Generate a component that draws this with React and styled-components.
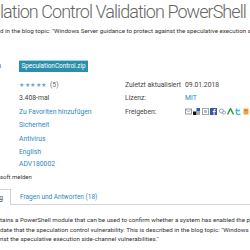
import styled, { createGlobalStyle } from "styled-components";

const Global = createGlobalStyle`
  html, body { margin: 0; padding: 0; background: #fff; }
  body { font-family: "Segoe UI", Roboto, "Noto Sans", sans-serif; color: #333; }
`;

const Page = styled.div`
  width: 250px;
  height: 250px;
  overflow: hidden;
  position: relative;
`;

const Title = styled.h1`
  margin: 0;
  font-size: 18px;
  line-height: 24px;
  font-weight: 300;
  letter-spacing: -0.95px;
  color: #666;
  white-space: nowrap;
`;

const Small = styled.div`
  font-size: ${(p) => p.size || 6.2}px;
  line-height: 10px;
  color: ${(p) => p.color || "#333"};
  white-space: nowrap;
  margin-top: ${(p) => p.mt || 0}px;
`;

// Eigenschaften-Tabelle, nach links aus dem Bild geschoben
const Details = styled.div`
  margin-left: -42px;
  margin-top: 24px;
`;

const Row = styled.div`
  display: grid;
  grid-template-columns: 61px 106px 60px 1fr;
  align-items: center;
  height: ${(p) => p.h || 13}px;
  font-size: 6.8px;
  white-space: nowrap;
`;

const Label = styled.div`
  color: #444;
`;

const Value = styled.div`
  color: ${(p) => (p.link ? "#2f88c4" : "#444")};
  display: flex;
  align-items: center;
  gap: 3px;
`;

const Button = styled.div`
  width: 69px;
  height: 11px;
  background: #2a8faa;
  border-top: 1px solid #9fd6e6;
  color: #fff;
  font-size: 6.4px;
  line-height: 11px;
  text-align: center;
`;

const Stars = styled.span`
  color: #6aa9cf;
  font-size: 6px;
  letter-spacing: 0.6px;
`;

const Icons = styled.div`
  display: flex;
  gap: 1.4px;
  align-items: center;
`;

const Tabs = styled.div`
  display: flex;
  margin-top: 7px;
  height: 15px;
  border-bottom: 1px solid #d4d4d4;
`;

const Tab = styled.div`
  display: flex;
  align-items: center;
  justify-content: ${(p) => (p.active ? "flex-end" : "flex-start")};
  width: ${(p) => p.w}px;
  overflow: hidden;
  white-space: nowrap;
  font-size: 6.5px;
  color: ${(p) => (p.active ? "#333" : "#2f88c4")};
  padding: ${(p) => (p.active ? "0 7px 0 0" : "0 0 0 9px")};
  box-sizing: border-box;
  border-top: ${(p) => (p.active ? "1px solid #d4d4d4" : "none")};
  border-right: ${(p) => (p.active ? "1px solid #d4d4d4" : "none")};
  background: #fff;
  margin-bottom: ${(p) => (p.active ? "-1px" : "0")};
`;

const Para = styled.p`
  margin: 11px 0 0;
  font-size: 6.2px;
  line-height: 9.5px;
  color: #333;
  white-space: nowrap;
`;

function ShareIcons() {
  return (
    <Icons>
      <svg width="7" height="7" viewBox="0 0 7 7">
        <rect x="0.5" y="1" width="6" height="5" fill="none" stroke="#999" />
        <path d="M0.5 1 L3.5 4 L6.5 1" fill="none" stroke="#999" />
      </svg>
      <svg width="7" height="7" viewBox="0 0 7 7">
        <rect x="3.5" y="0" width="3.5" height="3.5" fill="#2a5db0" />
        <rect x="0" y="3.5" width="3.5" height="3.5" fill="#111" />
        <rect x="3.5" y="3.5" width="3.5" height="3.5" fill="#aaa" />
      </svg>
      <svg width="7" height="7" viewBox="0 0 7 7">
        <rect x="0.5" y="0.5" width="6" height="6" fill="none" stroke="#9aa" />
        <rect x="2" y="2" width="3" height="3" fill="#bbb" />
      </svg>
      <svg width="7" height="7" viewBox="0 0 7 7">
        <rect width="7" height="7" fill="#3b5998" />
        <path d="M4.6 7 V4 H5.6 V3 H4.6 V2.3 Q4.6 1.8 5.2 1.8 H5.7 V0.9 H4.8 Q3.6 0.9 3.6 2.2 V3 H2.8 V4 H3.6 V7 Z" fill="#fff" />
      </svg>
      <svg width="7" height="7" viewBox="0 0 7 7">
        <circle cx="2.5" cy="3" r="2" fill="none" stroke="#8a9" />
        <circle cx="5" cy="4.5" r="1.6" fill="none" stroke="#aab" />
      </svg>
      <svg width="7" height="7" viewBox="0 0 7 7">
        <path d="M0.5 6.5 L3.5 0.5 L6.5 6.5" fill="none" stroke="#2a9a3a" strokeWidth="1.4" />
      </svg>
      <svg width="6" height="7" viewBox="0 0 6 7">
        <path d="M1.5 0.5 V5 Q1.5 6.3 3 6.3 H5.5 M0.5 2.5 H5" fill="none" stroke="#3fb2e6" strokeWidth="1.3" />
      </svg>
      <svg width="6" height="7" viewBox="0 0 6 7">
        <rect x="0.5" y="0.5" width="5" height="6" fill="#e8a640" />
        <rect x="1.5" y="2" width="3" height="1" fill="#c0702a" />
      </svg>
    </Icons>
  );
}

export default function App() {
  return (
    <Page>
      <Global />
      <Title>lation Control Validation PowerShell Script</Title>
      <Small mt={2}>
        d in the blog topic: "Windows Server guidance to protect against the speculative execution side-channel vulnerabilities."
      </Small>

      <Details>
        <Row h={12}>
          <Label>Herunterladen</Label>
          <Value>
            <Button>SpeculationControl.zip</Button>
          </Value>
          <Label />
          <Value />
        </Row>
        <div style={{ height: 6 }} />
        <Row h={13.5}>
          <Label>Bewertung</Label>
          <Value>
            <Stars>★★★★★</Stars>
            <span style={{ color: "#666" }}>(5)</span>
          </Value>
          <Label>Zuletzt aktualisiert</Label>
          <Value>09.01.2018</Value>
        </Row>
        <Row h={13.5}>
          <Label>Downloads</Label>
          <Value>3.408-mal</Value>
          <Label>Lizenz:</Label>
          <Value link>MIT</Value>
        </Row>
        <Row h={13.5}>
          <Label>Favoriten</Label>
          <Value link>Zu Favoriten hinzufügen</Value>
          <Label>Freigeben:</Label>
          <Value>
            <ShareIcons />
          </Value>
        </Row>
        <Row h={13.5}>
          <Label>Kategorie</Label>
          <Value link>Sicherheit</Value>
        </Row>
        <Row h={14}>
          <Label />
          <Value link>Antivirus</Value>
        </Row>
        <Row h={12}>
          <Label>Sprache</Label>
          <Value link>English</Value>
        </Row>
        <Row h={12}>
          <Label>Tags</Label>
          <Value link>ADV180002</Value>
        </Row>
      </Details>

      <Small mt={2} size={6}>soft melden</Small>

      <Tabs>
        <Tab active w={11}>Beschreibung</Tab>
        <Tab w={90}>Fragen und Antworten (18)</Tab>
      </Tabs>

      <Para>
        tains a PowerShell module that can be used to confirm whether a system has enabled the protections
        <br />
        date that the speculation control vulnerability. This is described in the blog topic: "Windows Server guidance
        <br />
        nst the speculative execution side-channel vulnerabilities."
      </Para>
    </Page>
  );
}
